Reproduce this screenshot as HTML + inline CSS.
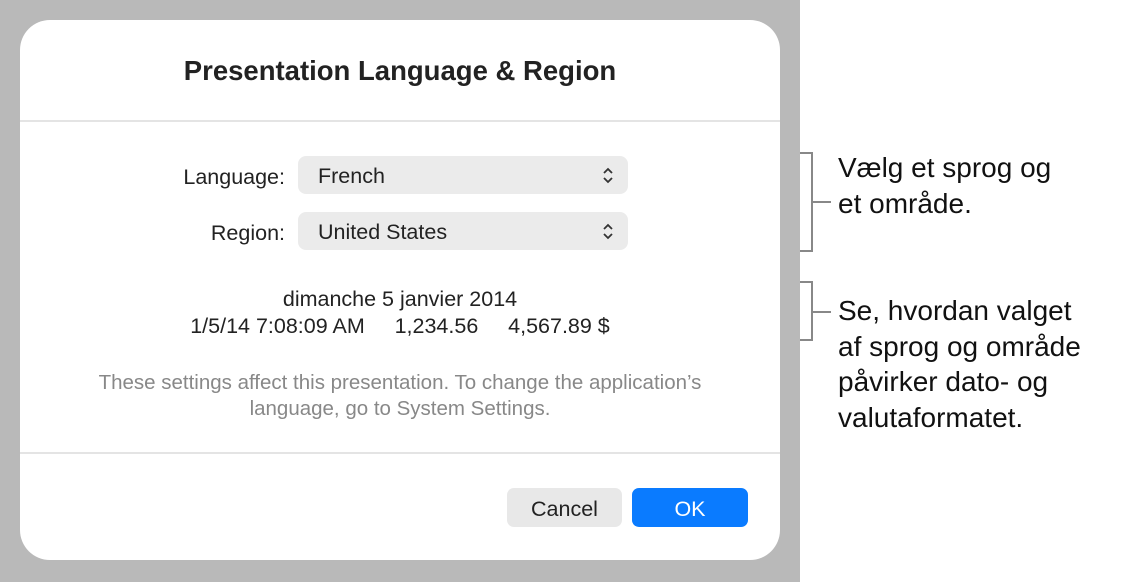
<!DOCTYPE html>
<html><head><meta charset="utf-8"><style>
body{margin:0;width:1124px;height:582px;background:#fff;font-family:"Liberation Sans",sans-serif;position:relative;overflow:hidden}
.bg{position:absolute;left:0;top:0;width:800px;height:582px;background:#b9b9b9}
.dlg{position:absolute;left:20px;top:20px;width:760px;height:540px;background:#fff;border-radius:30px}
.t{position:absolute;left:0;width:760px;text-align:center;color:#222}
.line{position:absolute;left:0;width:760px;height:2px;background:#e4e4e4}
.lbl{position:absolute;right:495px;font-size:21.5px;color:#222}
.pop{position:absolute;left:278px;width:330px;height:38px;background:#ebebeb;border-radius:8px;font-size:21.5px;color:#222;line-height:40px;text-indent:20px}
.pop svg{position:absolute;right:14px;top:11px}
.btn{position:absolute;top:468px;height:39px;border-radius:7px;font-size:21.5px;line-height:42px;text-align:center}
.ann{position:absolute;left:838px;font-size:28px;line-height:35.5px;color:#111}
.b{position:absolute;background:#888}
</style></head><body>
<div class="bg"></div>
<div class="dlg">
<div class="t" style="top:35px;font-size:27.5px;font-weight:bold">Presentation Language &amp; Region</div>
<div class="line" style="top:100px"></div>
<div class="lbl" style="top:145px">Language:</div>
<div class="pop" style="top:136px">French<svg width="12" height="17" viewBox="0 0 12 17"><path d="M2 6L6 2L10 6M2 11L6 15L10 11" fill="none" stroke="#333" stroke-width="1.8"/></svg></div>
<div class="lbl" style="top:201px">Region:</div>
<div class="pop" style="top:192px">United States<svg width="12" height="17" viewBox="0 0 12 17"><path d="M2 6L6 2L10 6M2 11L6 15L10 11" fill="none" stroke="#333" stroke-width="1.8"/></svg></div>
<div class="t" style="top:267px;font-size:21.5px">dimanche 5 janvier 2014</div>
<div class="t" style="top:294px;font-size:21.5px">1/5/14 7:08:09 AM&nbsp;&nbsp;&nbsp;&nbsp;&nbsp;1,234.56&nbsp;&nbsp;&nbsp;&nbsp;&nbsp;4,567.89 $</div>
<div class="t" style="top:350px;font-size:20.5px;line-height:26px;color:#888">These settings affect this presentation. To change the application’s<br>language, go to System Settings.</div>
<div class="line" style="top:432px"></div>
<div class="btn" style="left:487px;width:115px;background:#e8e8e8;color:#222">Cancel</div>
<div class="btn" style="left:612px;width:116px;background:#0a7bff;color:#fff">OK</div>
</div>
<div class="b" style="left:811px;top:152px;width:2px;height:100px"></div>
<div class="b" style="left:800px;top:152px;width:12px;height:2px"></div>
<div class="b" style="left:800px;top:250px;width:12px;height:2px"></div>
<div class="b" style="left:811px;top:201px;width:20px;height:2px"></div>
<div class="b" style="left:811px;top:281px;width:2px;height:60px"></div>
<div class="b" style="left:800px;top:281px;width:12px;height:2px"></div>
<div class="b" style="left:800px;top:339px;width:12px;height:2px"></div>
<div class="b" style="left:811px;top:311px;width:20px;height:2px"></div>
<div class="ann" style="top:150px">Vælg et sprog og<br>et område.</div>
<div class="ann" style="top:293px">Se, hvordan valget<br>af sprog og område<br>påvirker dato- og<br>valutaformatet.</div>
</body></html>
